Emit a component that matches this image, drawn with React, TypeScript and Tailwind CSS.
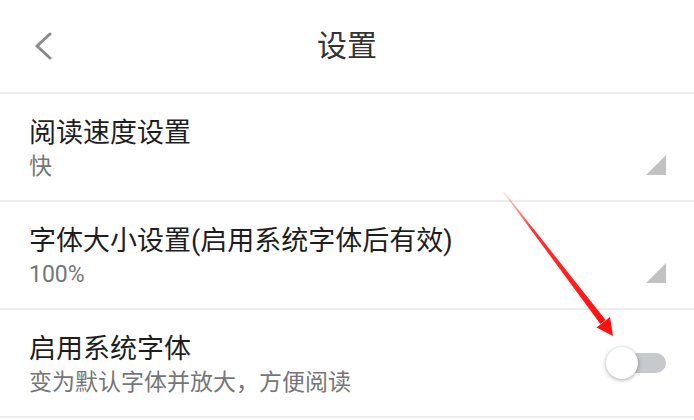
import type { ReactNode } from 'react'

const font = { fontFamily: 'Roboto, "Noto Sans CJK SC", sans-serif' }

function Corner() {
  return (
    <svg width="20" height="20" viewBox="0 0 20 20" className="block">
      <polygon points="20,0 20,20 0,20" fill="#c2c2c2" />
    </svg>
  )
}

function Toggle() {
  return (
    <div className="relative flex h-[32px] w-[60px] items-center">
      <div className="ml-[10px] h-[20px] w-[50px] rounded-full bg-[#c6c9ce]" />
      <div className="absolute left-0 top-0 h-[32px] w-[32px] rounded-full bg-white shadow-[0_1px_4px_rgba(0,0,0,0.35)]" />
    </div>
  )
}

function Row({ title, sub, right, center }: { title: string; sub: string; right: ReactNode; center?: boolean }) {
  return (
    <div
      className={`flex h-[108px] justify-between border-b-2 border-[#ececec] pl-[29px] pr-[28px] ${
        center ? 'items-center' : 'items-start'
      }`}
    >
      <div className={`flex flex-col ${center ? 'pt-[4px]' : 'pt-[22px]'}`}>
        <div className="text-[27px] leading-[34px] text-[#1e1e1e]">{title}</div>
        <div className="mt-[2px] text-[23px] leading-[30px] text-[#767676]">{sub}</div>
      </div>
      {center ? right : <div className="pt-[61px]">{right}</div>}
    </div>
  )
}

export default function App() {
  return (
    <div className="relative h-[420px] w-[694px] overflow-hidden bg-white" style={font}>
      <header className="flex h-[94px] items-center border-b-2 border-[#ebebeb]">
        <div className="w-[52px] pl-[35px]">
          <svg width="17" height="28" viewBox="0 0 17 28" className="block">
            <polyline
              points="15,2 2,14 15,26"
              fill="none"
              stroke="#8a8a8a"
              strokeWidth="3"
              strokeLinecap="round"
              strokeLinejoin="round"
            />
          </svg>
        </div>
        <div className="flex-1 text-center text-[30px] leading-[36px] text-[#333333]">设置</div>
        <div className="w-[52px]" />
      </header>

      <Row title="阅读速度设置" sub="快" right={<Corner />} />
      <Row title="字体大小设置(启用系统字体后有效)" sub="100%" right={<Corner />} />
      <Row title="启用系统字体" sub="变为默认字体并放大，方便阅读" right={<Toggle />} center />

      {/* annotation arrow */}
      <svg className="pointer-events-none absolute left-0 top-0" width="694" height="420" viewBox="0 0 694 420">
        <defs>
          <linearGradient id="fade" x1="503" y1="192" x2="603" y2="322" gradientUnits="userSpaceOnUse">
            <stop offset="0" stopColor="#ff2a2a" stopOpacity="0.15" />
            <stop offset="0.3" stopColor="#ff1a1a" stopOpacity="0.9" />
            <stop offset="1" stopColor="#ff1010" stopOpacity="1" />
          </linearGradient>
        </defs>
        <polygon points="503,192 504,191.5 605.6,320 600.4,324" fill="url(#fade)" />
        <polygon points="613,336 596.5,327.5 610,317" fill="#ff1010" />
      </svg>
    </div>
  )
}
